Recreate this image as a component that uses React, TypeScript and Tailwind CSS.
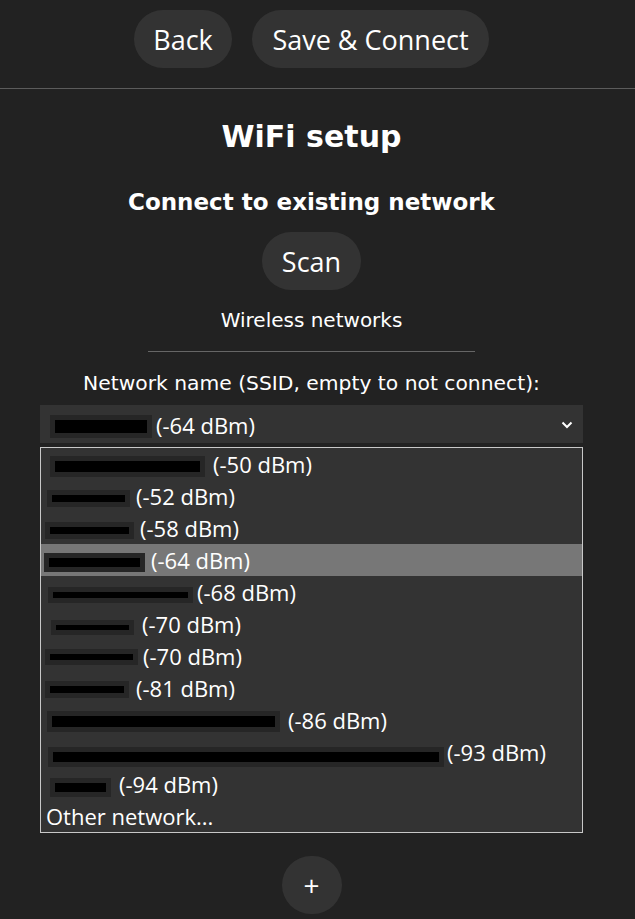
import React from "react";

const verdana = { fontFamily: '"DejaVu Sans", Verdana, sans-serif' };
const ui = { fontFamily: '"Open Sans", "Noto Sans", sans-serif' };

type Row = { bx1: number; bx2: number; by1: number; by2: number; tx: number; label: string };

const rows: Row[] = [
  { bx1: 50, bx2: 205, by1: 456, by2: 477, tx: 213, label: "(-50 dBm)" },
  { bx1: 47, bx2: 130, by1: 490, by2: 507, tx: 136, label: "(-52 dBm)" },
  { bx1: 45, bx2: 134, by1: 522, by2: 539, tx: 140, label: "(-58 dBm)" },
  { bx1: 44, bx2: 145, by1: 553, by2: 572, tx: 151, label: "(-64 dBm)" },
  { bx1: 48, bx2: 193, by1: 587, by2: 603, tx: 197, label: "(-68 dBm)" },
  { bx1: 51, bx2: 134, by1: 620, by2: 635, tx: 142, label: "(-70 dBm)" },
  { bx1: 45, bx2: 138, by1: 649, by2: 665, tx: 143, label: "(-70 dBm)" },
  { bx1: 45, bx2: 129, by1: 681, by2: 698, tx: 136, label: "(-81 dBm)" },
  { bx1: 47, bx2: 280, by1: 711, by2: 732, tx: 288, label: "(-86 dBm)" },
  { bx1: 48, bx2: 444, by1: 747, by2: 767, tx: 447, label: "(-93 dBm)" },
  { bx1: 50, bx2: 111, by1: 778, by2: 797, tx: 119, label: "(-94 dBm)" },
];

function Btn({ children, className = "" }: { children: React.ReactNode; className?: string }) {
  return (
    <button
      className={`h-[58px] rounded-full bg-[#333] text-white text-[27px] leading-none ${className}`}
      style={ui}
    >
      {children}
    </button>
  );
}

export default function App() {
  const listLeft = 41;
  return (
    <div className="w-[635px] h-[919px] bg-[#222] text-white overflow-hidden">
      <div className="w-[623px] flex justify-center gap-[20px] pt-[10px]">
        <Btn className="w-[98px]">Back</Btn>
        <Btn className="w-[237px]">Save &amp; Connect</Btn>
      </div>
      <div className="mt-[20px] h-px bg-[#5c5c5c]" />
      <div className="w-[623px] flex flex-col items-center" style={verdana}>
        <div className="mt-[28px] h-[40px] leading-[40px] text-[30px] font-bold">WiFi setup</div>
        <div className="mt-[30px] h-[30px] leading-[30px] text-[23px] font-bold">Connect to existing network</div>
        <Btn className="mt-[15px] w-[99px]">Scan</Btn>
        <div className="mt-[15px] h-[30px] leading-[30px] text-[20px]">Wireless networks</div>
        <div className="mt-[16px] h-px w-[327px] bg-[#666]" />
        <div className="mt-[16px] h-[30px] leading-[30px] text-[20.3px]">Network name (SSID, empty to not connect):</div>
        <div className="mt-[7px] w-[543px] h-[38px] bg-[#333] relative flex items-center" style={ui}>
          <div className="absolute left-[10px] top-[10px] w-[102px] h-[23px] bg-black border-[5px] border-[#262626]" />
          <span className="pl-[116px] text-[22px] leading-none pt-[2px]">(-64 dBm)</span>
          <svg className="absolute right-[10px] top-[16px]" width="12" height="8" viewBox="0 0 12 8">
            <path d="M1.5 1.5 L6 6 L10.5 1.5" stroke="white" strokeWidth="2" fill="none" />
          </svg>
        </div>
        <div className="mt-[4px] w-[543px] border border-[#c8c8c8] bg-[#333] flex flex-col" style={ui}>
          {rows.map((r, i) => {
            const top = 448 + 32 * i;
            return (
              <div
                key={i}
                className={`relative h-[32px] flex items-center text-[22px] ${i === 3 ? "bg-[#777]" : ""}`}
              >
                <span style={{ paddingLeft: r.tx - listLeft }}>{r.label}</span>
                <div
                  className="absolute bg-black border-[5px] border-[#262626]"
                  style={{
                    left: r.bx1 - listLeft,
                    top: r.by1 - top,
                    width: r.bx2 - r.bx1,
                    height: r.by2 - r.by1,
                  }}
                />
              </div>
            );
          })}
          <div className="h-[32px] flex items-center pl-[5px] text-[22px]">Other network...</div>
        </div>
        <Btn className="mt-[23px] w-[60px] text-[28px]">+</Btn>
      </div>
    </div>
  );
}
